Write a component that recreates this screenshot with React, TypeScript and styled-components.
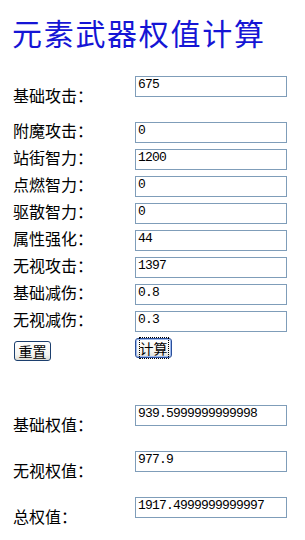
import styled, { createGlobalStyle } from "styled-components";

const Global = createGlobalStyle`
  body {
    margin: 0;
    background: #ffffff;
    font-family: "Noto Sans CJK SC", "Liberation Serif", serif;
  }
`;

const Page = styled.div`
  padding: 0 0 0 12px;
`;

const Title = styled.h1`
  margin: 0;
  padding-top: 12px;
  height: 64px;
  font-size: 30px;
  line-height: 40px;
  font-weight: normal;
  color: #1515d5;
  font-family: "Noto Sans CJK SC", serif;
  letter-spacing: 1.7px;
`;

const Form = styled.div`
  display: flex;
  flex-direction: column;
`;

const Row = styled.div<{ $h: number }>`
  display: flex;
  align-items: flex-start;
  height: ${(p) => p.$h}px;
`;

const Label = styled.div<{ $drop?: boolean }>`
  width: 122px;
  font-size: 16px;
  line-height: 21px;
  color: #000;
  margin-top: ${(p) => (p.$drop ? 9 : -2)}px;
  padding-left: 1px;
`;

const Field = styled.input`
  box-sizing: border-box;
  width: 152px;
  height: 21px;
  margin: 0;
  padding: 1px 2px 5px 2px;
  border: 1px solid #7f9db9;
  background: #fff;
  font-family: "Liberation Mono", monospace;
  font-size: 13px;
  letter-spacing: -0.8px;
  color: #000;
  outline: none;
`;

const ButtonCell = styled.div`
  width: 121px;
  padding-left: 2px;
`;

const Button = styled.button<{ $focus?: boolean }>`
  box-sizing: border-box;
  width: 37px;
  height: 20px;
  padding: 0;
  margin: 0;
  border: 1px solid ${(p) => (p.$focus ? "#2a4f9a" : "#1c3f6e")};
  border-radius: 3px;
  background: linear-gradient(#ffffff, #f4f4f0 70%, #dcdcd4);
  font-family: "Noto Sans CJK SC", sans-serif;
  font-size: 14px;
  line-height: 16px;
  color: #000;
  box-shadow: ${(p) => (p.$focus ? "inset 0 0 0 1px #9cb8ee" : "none")};
  span {
    outline: ${(p) => (p.$focus ? "1px dotted #000" : "none")};
  }
`;

const inputs: [string, string][] = [
  ["附魔攻击：", "0"],
  ["站街智力：", "1200"],
  ["点燃智力：", "0"],
  ["驱散智力：", "0"],
  ["属性强化：", "44"],
  ["无视攻击：", "1397"],
  ["基础减伤：", "0.8"],
  ["无视减伤：", "0.3"],
];

const results: [string, string][] = [
  ["基础权值：", "939.5999999999998"],
  ["无视权值：", "977.9"],
  ["总权值：", "1917.4999999999997"],
];

export default function App() {
  return (
    <Page>
      <Global />
      <Title>元素武器权值计算</Title>
      <Form>
        <Row $h={46}>
          <Label $drop>基础攻击：</Label>
          <Field defaultValue="675" />
        </Row>
        {inputs.map(([label, value]) => (
          <Row $h={27} key={label}>
            <Label>{label}</Label>
            <Field defaultValue={value} />
          </Row>
        ))}
        <Row $h={67}>
          <ButtonCell>
            <Button>
              <span>重置</span>
            </Button>
          </ButtonCell>
          <Button $focus>
            <span>计算</span>
          </Button>
        </Row>
        {results.map(([label, value]) => (
          <Row $h={46} key={label}>
            <Label $drop>{label}</Label>
            <Field readOnly defaultValue={value} />
          </Row>
        ))}
      </Form>
    </Page>
  );
}
